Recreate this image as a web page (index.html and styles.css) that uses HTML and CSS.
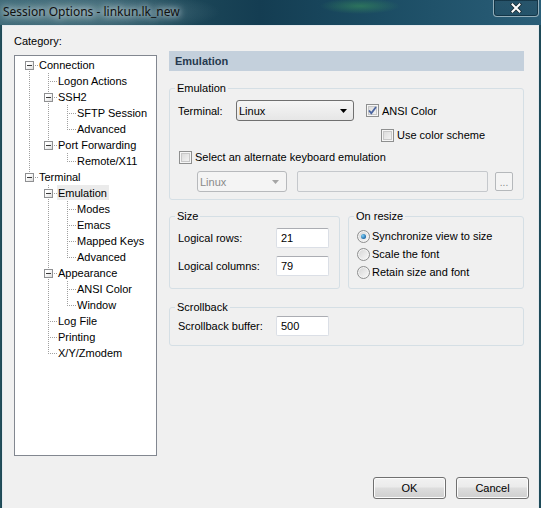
FILE: index.html
```html
<!DOCTYPE html>
<html>
<head>
<meta charset="utf-8">
<title>Session Options</title>
<link rel="stylesheet" href="styles.css">
</head>
<body>
<div class="window">
  <div class="titlebar">
    <span class="title">Session Options - linkun.lk_new</span>
    <div class="close">
      <svg width="12" height="10" viewBox="0 0 12 10">
        <path d="M2.5 1.5 L9.5 8.5 M9.5 1.5 L2.5 8.5" stroke="#1b2b33" stroke-width="3.6" stroke-linecap="square"/>
        <path d="M2.5 1.5 L9.5 8.5 M9.5 1.5 L2.5 8.5" stroke="#ffffff" stroke-width="2" stroke-linecap="square"/>
      </svg>
    </div>
  </div>
  <div class="client">
    <div class="main">
      <div class="cat-label">Category:</div>
      <div class="tree">
        <div class="trow"><span class="cell c-F"><span class="exp"></span></span><span class="tlabel">Connection</span></div>
        <div class="trow"><span class="cell c-I"></span><span class="cell c-T"></span><span class="tlabel">Logon Actions</span></div>
        <div class="trow"><span class="cell c-I"></span><span class="cell c-T"><span class="exp"></span></span><span class="tlabel">SSH2</span></div>
        <div class="trow"><span class="cell c-I"></span><span class="cell c-I"></span><span class="cell c-T"></span><span class="tlabel">SFTP Session</span></div>
        <div class="trow"><span class="cell c-I"></span><span class="cell c-I"></span><span class="cell c-L"></span><span class="tlabel">Advanced</span></div>
        <div class="trow"><span class="cell c-I"></span><span class="cell c-L"><span class="exp"></span></span><span class="tlabel">Port Forwarding</span></div>
        <div class="trow"><span class="cell c-I"></span><span class="cell"></span><span class="cell c-L"></span><span class="tlabel">Remote/X11</span></div>
        <div class="trow"><span class="cell c-L"><span class="exp"></span></span><span class="tlabel">Terminal</span></div>
        <div class="trow"><span class="cell"></span><span class="cell c-T"><span class="exp"></span></span><span class="tlabel selected">Emulation</span></div>
        <div class="trow"><span class="cell"></span><span class="cell c-I"></span><span class="cell c-T"></span><span class="tlabel">Modes</span></div>
        <div class="trow"><span class="cell"></span><span class="cell c-I"></span><span class="cell c-T"></span><span class="tlabel">Emacs</span></div>
        <div class="trow"><span class="cell"></span><span class="cell c-I"></span><span class="cell c-T"></span><span class="tlabel">Mapped Keys</span></div>
        <div class="trow"><span class="cell"></span><span class="cell c-I"></span><span class="cell c-L"></span><span class="tlabel">Advanced</span></div>
        <div class="trow"><span class="cell"></span><span class="cell c-T"><span class="exp"></span></span><span class="tlabel">Appearance</span></div>
        <div class="trow"><span class="cell"></span><span class="cell c-I"></span><span class="cell c-T"></span><span class="tlabel">ANSI Color</span></div>
        <div class="trow"><span class="cell"></span><span class="cell c-I"></span><span class="cell c-L"></span><span class="tlabel">Window</span></div>
        <div class="trow"><span class="cell"></span><span class="cell c-T"></span><span class="tlabel">Log File</span></div>
        <div class="trow"><span class="cell"></span><span class="cell c-T"></span><span class="tlabel">Printing</span></div>
        <div class="trow"><span class="cell"></span><span class="cell c-L"></span><span class="tlabel">X/Y/Zmodem</span></div>
      </div>
      <div class="right">
        <div class="page-header">Emulation</div>
        <fieldset class="group g-emul">
          <legend>Emulation</legend>
          <div class="row row-term">
            <span class="lbl lbl-term">Terminal:</span>
            <div class="combo"><span class="combo-text">Linux</span><svg class="arrow" width="7" height="4" viewBox="0 0 7 4"><path d="M0 0 H7 L3.5 4 Z" fill="#000"/></svg></div>
            <div class="check check-ansi"><span class="cb"><svg width="11" height="11" viewBox="0 0 11 11"><path d="M2 5.5 L4.3 8.2 L9 2" fill="none" stroke="#4a64a0" stroke-width="1.8"/></svg></span><span>ANSI Color</span></div>
          </div>
          <div class="row row-scheme">
            <div class="check check-scheme"><span class="cb"></span><span>Use color scheme</span></div>
          </div>
          <div class="row row-alt">
            <div class="check check-alt"><span class="cb"></span><span>Select an alternate keyboard emulation</span></div>
          </div>
          <div class="row row-altctl">
            <div class="combo disabled"><span class="combo-text">Linux</span><svg class="arrow" width="7" height="4" viewBox="0 0 7 4"><path d="M0 0 H7 L3.5 4 Z" fill="#a5a5a5"/></svg></div>
            <div class="textbox disabled"></div>
            <div class="btn-small">...</div>
          </div>
        </fieldset>
        <div class="pair">
          <fieldset class="group g-size">
            <legend>Size</legend>
            <div class="row field-row"><span class="lbl lbl-field">Logical rows:</span><div class="textbox num">21</div></div>
            <div class="row field-row second"><span class="lbl lbl-field">Logical columns:</span><div class="textbox num">79</div></div>
          </fieldset>
          <fieldset class="group g-resize">
            <legend>On resize</legend>
            <div class="row radio-row"><span class="radio on"></span><span>Synchronize view to size</span></div>
            <div class="row radio-row"><span class="radio"></span><span>Scale the font</span></div>
            <div class="row radio-row"><span class="radio"></span><span>Retain size and font</span></div>
          </fieldset>
        </div>
        <fieldset class="group g-scroll">
          <legend>Scrollback</legend>
          <div class="row field-row"><span class="lbl lbl-field">Scrollback buffer:</span><div class="textbox num">500</div></div>
        </fieldset>
      </div>
    </div>
    <div class="footer">
      <div class="button">OK</div>
      <div class="button">Cancel</div>
    </div>
  </div>
</div>
</body>
</html>
```

FILE: styles.css
```css
* { box-sizing: border-box; }
html, body { margin: 0; padding: 0; }
body {
  width: 541px;
  height: 508px;
  overflow: hidden;
  font-family: "Liberation Sans", Arial, sans-serif;
  font-size: 11px;
  color: #000;
  background: #1f4a58;
}
.window {
  width: 541px;
  height: 508px;
  display: flex;
  flex-direction: column;
  padding: 0 2px;
  background: linear-gradient(90deg, #2d5a66 0, #1a4450 1px, #234f5c 2px, #1e4a58 100%);
}
.titlebar {
  height: 25px;
  margin: 0 -2px;
  padding-left: 3px;
  display: flex;
  justify-content: space-between;
  align-items: flex-start;
  flex: none;
  background:
    radial-gradient(ellipse 40px 8px at 360px 6px, rgba(60,150,90,.55), transparent),
    radial-gradient(ellipse 130px 22px at 90px 12px, rgba(140,170,180,.55), transparent),
    linear-gradient(90deg, #3c6775 0%, #1f4a5a 30%, #143d52 48%, #1b4c63 70%, #2a5e78 100%);
}
.title {
  font-family: "Noto Sans", "Liberation Sans", sans-serif;
  font-size: 12px;
  line-height: 24px;
  color: #101010;
  text-shadow: 0 0 6px rgba(235,245,248,.9), 0 0 10px rgba(235,245,248,.7);
}
.close {
  width: 46px;
  height: 17px;
  margin-right: 2px;
  border: 1px solid rgba(220,235,240,.6);
  border-top: none;
  border-radius: 0 0 4px 4px;
  box-shadow: inset 0 0 0 1px rgba(0,20,30,.45);
  background: linear-gradient(rgba(40,80,100,.6), rgba(30,70,90,.4));
  display: flex;
  align-items: center;
  justify-content: center;
}
.client {
  flex: 1;
  background: #f0f0f0;
  border: 1px solid #e4eaee;
  border-bottom: none;
  padding: 9px 14px 0 11px;
}
.main {
  display: grid;
  grid-template-columns: 143px 355px;
  grid-template-rows: 16px auto;
  column-gap: 12px;
  align-items: start;
}
.cat-label {
  grid-column: 1;
  grid-row: 1;
  line-height: 13px;
}
.tree {
  --vd: repeating-linear-gradient(to bottom, #a0a0a0 0 1px, transparent 1px 2px);
  --hd: repeating-linear-gradient(to right, #a0a0a0 0 1px, transparent 1px 2px);
  grid-column: 1;
  grid-row: 2;
  margin-top: 4px;
  height: 401px;
  background: #fff;
  border: 1px solid #828790;
  padding: 1px 0 0 5px;
}
.trow {
  display: flex;
  height: 16px;
  align-items: flex-start;
}
.cell {
  width: 19px;
  height: 16px;
  flex: none;
  display: flex;
  align-items: center;
}
.c-I { background: var(--vd) 9px 0 / 1px 16px no-repeat; }
.c-T { background: var(--vd) 9px 0 / 1px 16px no-repeat, var(--hd) 9px 8px / 10px 1px no-repeat; }
.c-L { background: var(--vd) 9px 0 / 1px 9px no-repeat, var(--hd) 9px 8px / 10px 1px no-repeat; }
.c-F { background: var(--vd) 9px 8px / 1px 8px no-repeat, var(--hd) 9px 8px / 10px 1px no-repeat; }
.exp {
  width: 9px;
  height: 9px;
  margin-left: 5px;
  margin-top: 1px;
  border: 1px solid #8f9092;
  background: linear-gradient(135deg, #ffffff 30%, #dcdcdc);
  display: flex;
  align-items: center;
  justify-content: center;
}
.exp::before {
  content: "";
  width: 5px;
  height: 1px;
  background: #3a3a3a;
}
.tlabel {
  margin-left: -1px;
  padding: 0 2px 0 1px;
  line-height: 15px;
  height: 15px;
  white-space: nowrap;
  margin-top: 1px;
}
.tlabel.selected { background: #ebebeb; margin-top: 0; line-height: 16px; }
.right {
  grid-column: 2;
  grid-row: 1 / span 2;
  padding-top: 16px;
}
.page-header {
  height: 20px;
  line-height: 20px;
  background: #c4d0dc;
  color: #26394e;
  font-weight: bold;
  padding-left: 6px;
}
.group {
  margin: 0;
  min-width: 0;
  border: 1px solid #d5dfe5;
  border-radius: 3px;
  padding: 6px 7px 7px 8px;
}
.group legend {
  padding: 0 2px;
  margin-left: -3px;
  line-height: 12px;
}
.g-emul { margin-top: 11px; }
.row { display: flex; align-items: center; }
.row-term { height: 21px; }
.lbl-term { width: 58px; flex: none; }
.combo {
  width: 118px;
  height: 21px;
  border: 1px solid #707070;
  border-radius: 3px;
  background: linear-gradient(#f6f6f6, #e6e6e6);
  display: flex;
  align-items: center;
  justify-content: space-between;
  padding: 0 6px 0 2px;
  flex: none;
}
.combo.disabled {
  width: 90px;
  height: 21px;
  border-color: #b7b9bc;
  background: #f4f4f4;
  color: #8a8a8a;
  padding-right: 7px;
}
.check { display: flex; align-items: center; gap: 3px; white-space: nowrap; }
.cb {
  width: 13px;
  height: 13px;
  flex: none;
  border: 1px solid #8e8f8f;
  background: linear-gradient(135deg, #d6d6d6, #f8f8f8);
  box-shadow: inset 0 0 0 1px #f6f6f6, inset 0 0 0 2px #c8c8c8;
  display: flex;
  align-items: center;
  justify-content: center;
}
.check-ansi { margin-left: 12px; }
.row-scheme { height: 14px; margin-top: 7px; }
.check-scheme { margin-left: 203px; }
.row-alt { height: 14px; margin-top: 8px; }
.check-alt { margin-left: 1px; }
.row-altctl { height: 21px; margin-top: 7px; }
.row-altctl .combo { margin-left: 19px; }
.textbox {
  height: 20px;
  background: #fff;
  border: 1px solid #dbdfe6;
  border-top-color: #abadb3;
  border-radius: 2px;
  padding-left: 4px;
  line-height: 18px;
}
.textbox.disabled {
  width: 191px;
  height: 21px;
  margin-left: 10px;
  background: #f0f0f0;
  border: 1px solid #c5c8cc;
}
.btn-small {
  width: 18px;
  height: 19px;
  margin-left: 7px;
  border: 1px solid #b5b8bb;
  border-radius: 2px;
  background: #f4f4f4;
  color: #8a8a8a;
  text-align: center;
  line-height: 20px;
  font-size: 10px;
}
.pair {
  display: flex;
  gap: 8px;
  margin-top: 10px;
}
.g-size { width: 171px; flex: none; padding-bottom: 10px; }
.g-resize { flex: 1; padding-top: 5px; }
.field-row { height: 20px; }
.field-row.second { margin-top: 8px; }
.lbl-field { width: 98px; flex: none; }
.textbox.num { width: 53px; }
.radio-row { height: 18px; gap: 2px; }
.radio {
  width: 13px;
  height: 13px;
  border-radius: 50%;
  border: 1px solid #8e8f8f;
  background: linear-gradient(135deg, #d4d4d4, #fafafa);
  box-shadow: inset 0 0 0 1px #f4f4f4;
  display: flex;
  align-items: center;
  justify-content: center;
  flex: none;
}
.radio.on::before {
  content: "";
  width: 5px;
  height: 5px;
  border-radius: 50%;
  background: radial-gradient(circle at 35% 35%, #7fd0f6, #1f6aa8 70%, #184f84);
}
.g-scroll { margin-top: 12px; padding-top: 3px; padding-bottom: 9px; }
.footer {
  display: flex;
  justify-content: flex-end;
  gap: 10px;
  margin-top: 21px;
  margin-right: -5px;
}
.button {
  width: 73px;
  height: 22px;
  border: 1px solid #707070;
  border-radius: 3px;
  background: linear-gradient(#f2f2f2 0%, #ebebeb 45%, #dddddd 50%, #cfcfcf 100%);
  box-shadow: inset 0 0 0 1px #fcfcfc;
  text-align: center;
  line-height: 20px;
}
```
